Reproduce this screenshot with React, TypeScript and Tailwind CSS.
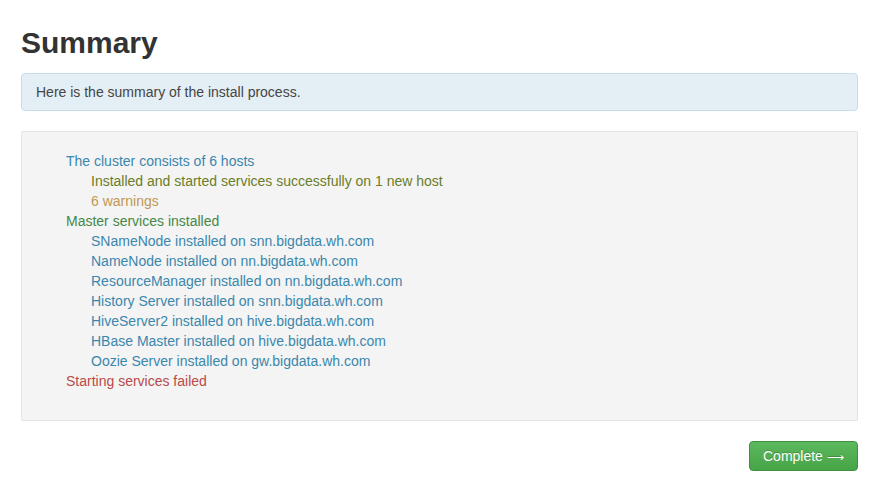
import React from 'react';

type Line = { text: string; color: string; level: number };

const lines: Line[] = [
  { text: 'The cluster consists of 6 hosts', color: 'text-[#3a87ad]', level: 0 },
  { text: 'Installed and started services successfully on 1 new host', color: 'text-[#6b7d27]', level: 1 },
  { text: '6 warnings', color: 'text-[#c09853]', level: 1 },
  { text: 'Master services installed', color: 'text-[#468847]', level: 0 },
  { text: 'SNameNode installed on snn.bigdata.wh.com', color: 'text-[#3a87ad]', level: 1 },
  { text: 'NameNode installed on nn.bigdata.wh.com', color: 'text-[#3a87ad]', level: 1 },
  { text: 'ResourceManager installed on nn.bigdata.wh.com', color: 'text-[#3a87ad]', level: 1 },
  { text: 'History Server installed on snn.bigdata.wh.com', color: 'text-[#3a87ad]', level: 1 },
  { text: 'HiveServer2 installed on hive.bigdata.wh.com', color: 'text-[#3a87ad]', level: 1 },
  { text: 'HBase Master installed on hive.bigdata.wh.com', color: 'text-[#3a87ad]', level: 1 },
  { text: 'Oozie Server installed on gw.bigdata.wh.com', color: 'text-[#3a87ad]', level: 1 },
  { text: 'Starting services failed', color: 'text-[#b94a48]', level: 0 },
];

const App = () => {
  return (
    <div className="min-h-screen bg-white pt-[23px] pl-[21px] pr-[20px] font-['Liberation_Sans',Arial,sans-serif] text-[14px] leading-[20px] text-[#333]">
      <h2 className="mb-[10px] text-[30px] leading-[40px] font-bold text-[#333]">Summary</h2>

      {/* info alert */}
      <div className="mb-[20px] rounded-[4px] border border-[#c6dce7] bg-[#e4eff5] px-[14px] py-[8px] text-[#444]">
        Here is the summary of the install process.
      </div>

      {/* well with summary */}
      <div className="rounded-[2px] border border-[#e3e3e3] bg-[#f4f4f4] p-[19px]">
        <ul className="mb-[10px] ml-[25px]">
          {lines.map((line, index) => (
            <li key={index} className={`${line.color} ${line.level === 1 ? 'pl-[25px]' : ''}`}>
              {line.text}
            </li>
          ))}
        </ul>
      </div>

      <div className="mt-[20px] flex justify-end">
        <button className="h-[30px] w-[109px] rounded-[4px] border border-[#3e8f3e] bg-gradient-to-b from-[#5cb85c] to-[#47a447] text-[14px] text-white [text-shadow:0_-1px_0_rgba(0,0,0,0.2)]">
          Complete <span className="font-['DejaVu_Sans',sans-serif] text-[12px]">&#x27F6;</span>
        </button>
      </div>
    </div>
  );
};

export default App;
